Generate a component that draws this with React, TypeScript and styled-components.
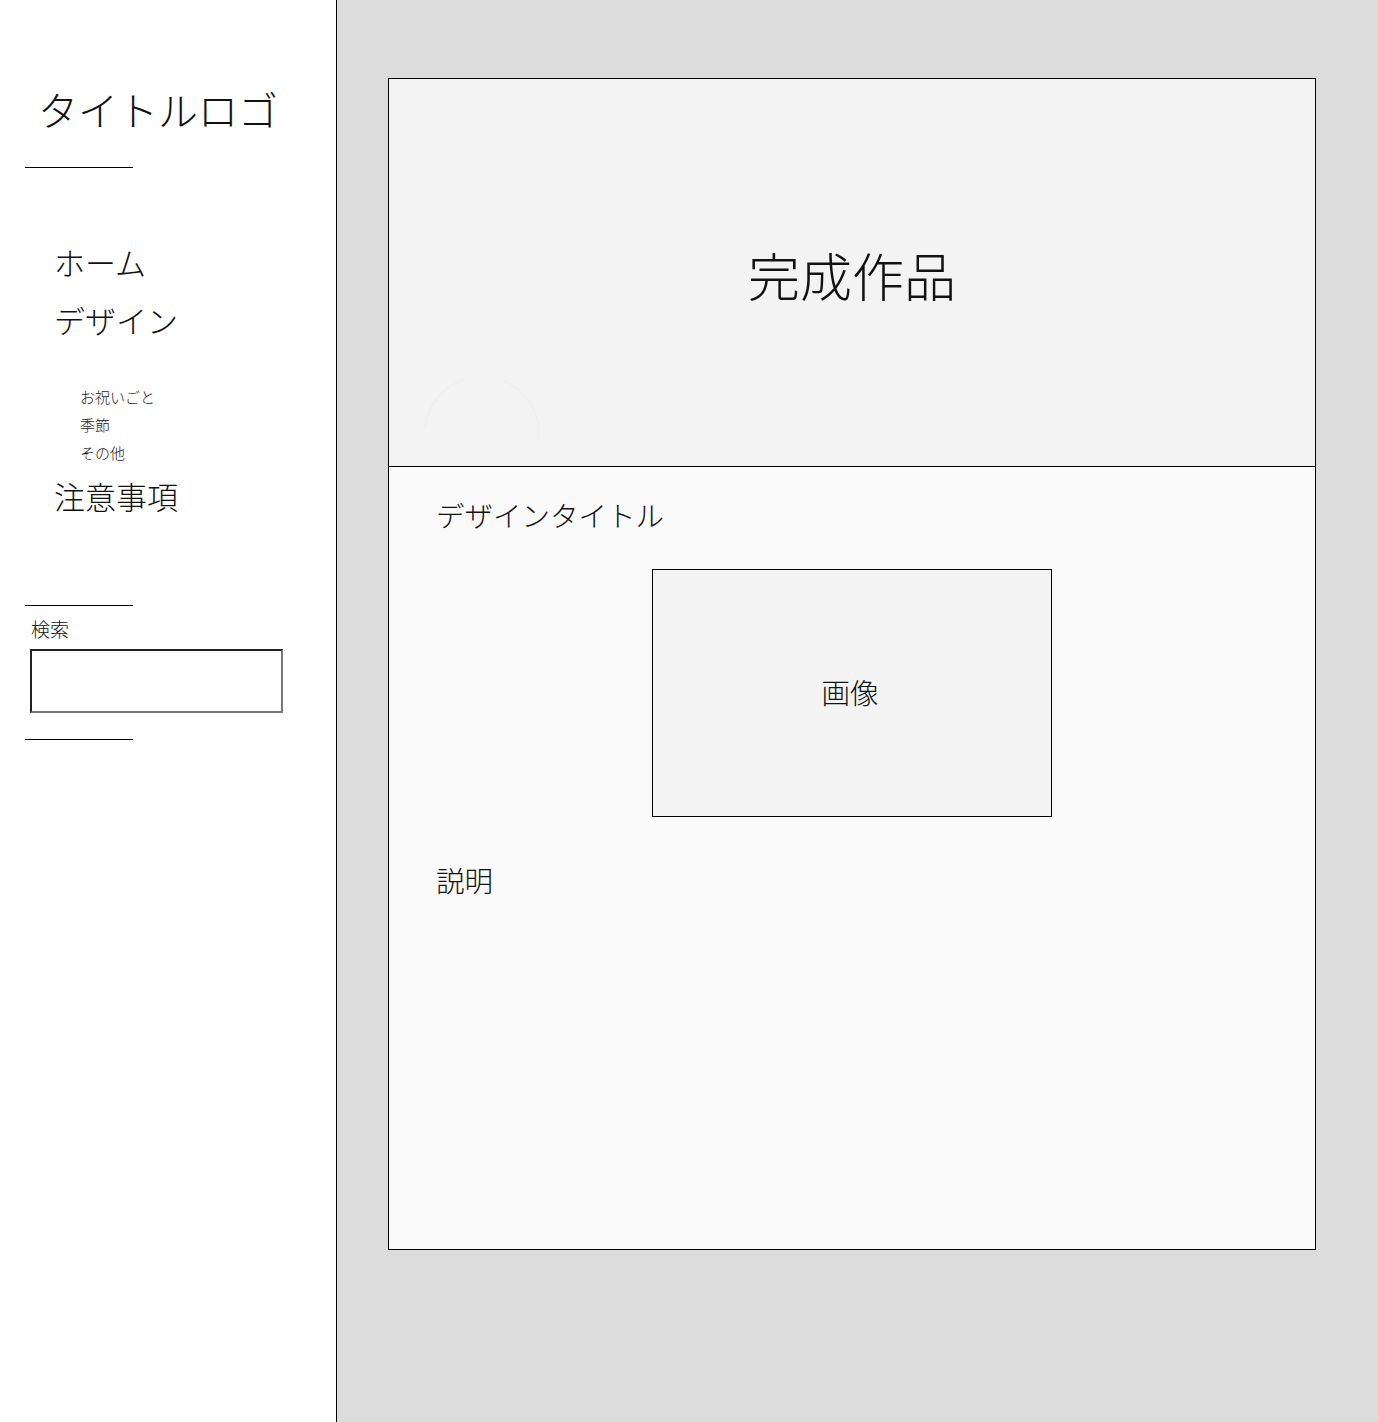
import React from "react";
import styled, { createGlobalStyle } from "styled-components";

const Global = createGlobalStyle`
  html, body { margin: 0; padding: 0; }
  body {
    font-family: "Noto Sans CJK JP", "Noto Sans", sans-serif;
    font-weight: 300;
    color: #111;
  }
`;

const Page = styled.div`
  display: flex;
  min-height: 1422px;
`;

const Sidebar = styled.aside`
  width: 336px;
  flex-shrink: 0;
  background: #fff;
  border-right: 1px solid #000;
  padding-top: 80px;
  box-sizing: content-box;
`;

const Logo = styled.h1`
  margin: 0 0 0 38px;
  font-size: 40px;
  font-weight: 300;
  line-height: 58px;
  letter-spacing: 0px;
`;

const Rule = styled.hr<{ $top: number }>`
  width: 108px;
  margin: ${(p) => p.$top}px 0 0 25px;
  border: none;
  border-top: 1px solid #000;
  height: 0;
`;

const Nav = styled.nav`
  margin-top: 65px;
  padding-left: 54px;
  display: flex;
  flex-direction: column;
`;

const NavItem = styled.a`
  font-size: 31px;
  line-height: 58px;
  color: #111;
  text-decoration: none;
`;

const SubList = styled.ul`
  list-style: none;
  margin: 34px 0 0 26px;
  padding: 0;
`;

const SubItem = styled.li`
  font-size: 15px;
  line-height: 28px;
  color: #222;
`;

const SearchLabel = styled.div`
  margin: 10px 0 0 31px;
  font-size: 19px;
  line-height: 26px;
`;

const SearchInput = styled.input`
  display: block;
  margin: 7px 0 0 30px;
  width: 253px;
  height: 64px;
  box-sizing: border-box;
  border: 2px inset #767676;
  background: #fff;
`;

const Main = styled.main`
  flex: 1;
  background: #dcdcdc;
  padding: 78px 0 0 51px;
`;

const Card = styled.section`
  width: 928px;
  height: 1172px;
  box-sizing: border-box;
  border: 1px solid #000;
  background: #fafafa;
  display: flex;
  flex-direction: column;
`;

const Hero = styled.div`
  position: relative;
  height: 387px;
  flex-shrink: 0;
  background: #f3f3f3;
  border-bottom: 1px solid #000;
  display: flex;
  align-items: center;
  justify-content: center;
`;

const HeroTitle = styled.h2`
  margin: 0;
  font-size: 52px;
  font-weight: 300;
  padding-top: 4px;
`;

const Spinner = styled.svg`
  position: absolute;
  left: 32px;
  top: 300px;
`;

const Body = styled.div`
  padding: 28px 0 0 47px;
  display: flex;
  flex-direction: column;
`;

const SectionTitle = styled.h3`
  margin: 0;
  font-size: 28.5px;
  font-weight: 300;
  line-height: 40px;
`;

const ImageBox = styled.div`
  align-self: flex-start;
  margin: 34px 0 0 216px;
  width: 400px;
  height: 248px;
  box-sizing: border-box;
  border: 1px solid #000;
  background: #f4f4f4;
  display: flex;
  align-items: center;
  justify-content: center;
  font-size: 28.5px;
  padding: 0 4px 4px 0;
`;

const Desc = styled.h3`
  margin: 43px 0 0 0;
  font-size: 28.5px;
  font-weight: 300;
  line-height: 40px;
`;

export default function App() {
  return (
    <>
      <Global />
      <Page>
        <Sidebar>
          <Logo>タイトルロゴ</Logo>
          <Rule $top={29} />
          <Nav>
            <NavItem>ホーム</NavItem>
            <NavItem>デザイン</NavItem>
            <SubList>
              <SubItem>お祝いごと</SubItem>
              <SubItem>季節</SubItem>
              <SubItem>その他</SubItem>
            </SubList>
            <NavItem>注意事項</NavItem>
          </Nav>
          <Rule $top={80} />
          <SearchLabel>検索</SearchLabel>
          <SearchInput />
          <Rule $top={26} />
        </Sidebar>
        <Main>
          <Card>
            <Hero>
              <HeroTitle>完成作品</HeroTitle>
              <Spinner width="130" height="90" viewBox="0 0 130 90">
                <path d="M4 50 A 56 56 0 0 1 118 60" fill="none" stroke="#efefef" strokeWidth="1.5" />
              </Spinner>
            </Hero>
            <Body>
              <SectionTitle>デザインタイトル</SectionTitle>
              <ImageBox>画像</ImageBox>
              <Desc>説明</Desc>
            </Body>
          </Card>
        </Main>
      </Page>
    </>
  );
}
